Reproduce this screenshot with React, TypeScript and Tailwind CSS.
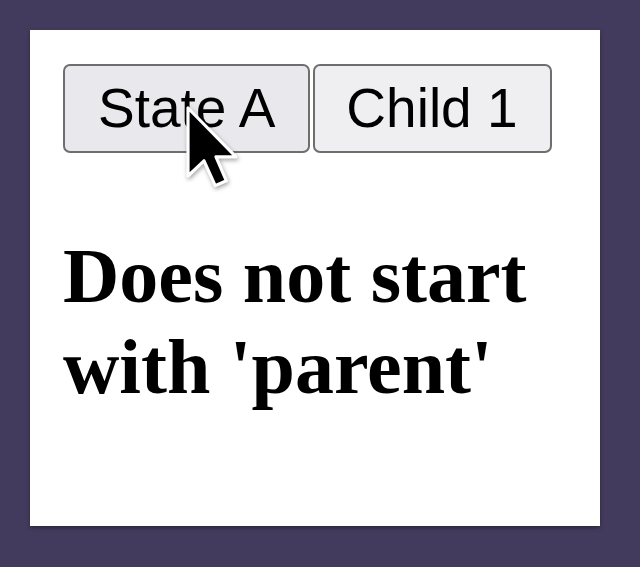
import React from "react";

function Cursor() {
    return (
        <svg
            className="absolute left-[184px] top-[104px] pointer-events-none drop-shadow-[1px_2px_2px_rgba(0,0,0,0.35)]"
            width="56"
            height="88"
            viewBox="-1 -1 14 22"
        >
            <polygon
                points="0,0 0,17 4,13.2 6.8,19.4 9.6,18.2 7,12.2 12,12.2"
                fill="#000"
                stroke="#fff"
                strokeWidth="0.8"
                strokeLinejoin="round"
            />
        </svg>
    );
}

export default function App() {
    return (
        <div className="w-[640px] h-[567px] bg-[#433b5d] pt-[30px] pl-[30px] relative">
            <div className="w-[570px] h-[496px] bg-white shadow-[0_2px_4px_rgba(0,0,0,0.35)] pt-[34px] pl-[33px]">
                {/* Buttons row */}
                <div className="flex gap-[3px]">
                    <button className="h-[89px] px-[33px] border-2 border-[#6e6e6e] rounded-[7px] bg-[#e9e9ed] text-black text-[55px] leading-none font-['Liberation_Sans',Arial,sans-serif]">
                        State A
                    </button>
                    <button className="h-[89px] pl-[31px] pr-[32px] border-2 border-[#6e6e6e] rounded-[7px] bg-[#efeff2] text-black text-[55px] leading-none font-['Liberation_Sans',Arial,sans-serif]">
                        Child 1
                    </button>
                </div>

                <h1 className="mt-[77px] text-[78px] leading-[91px] font-bold text-black font-['Liberation_Serif','Times_New_Roman',serif]">
                    Does not start
                    <br />
                    with 'parent'
                </h1>
            </div>
            <Cursor />
        </div>
    );
}
